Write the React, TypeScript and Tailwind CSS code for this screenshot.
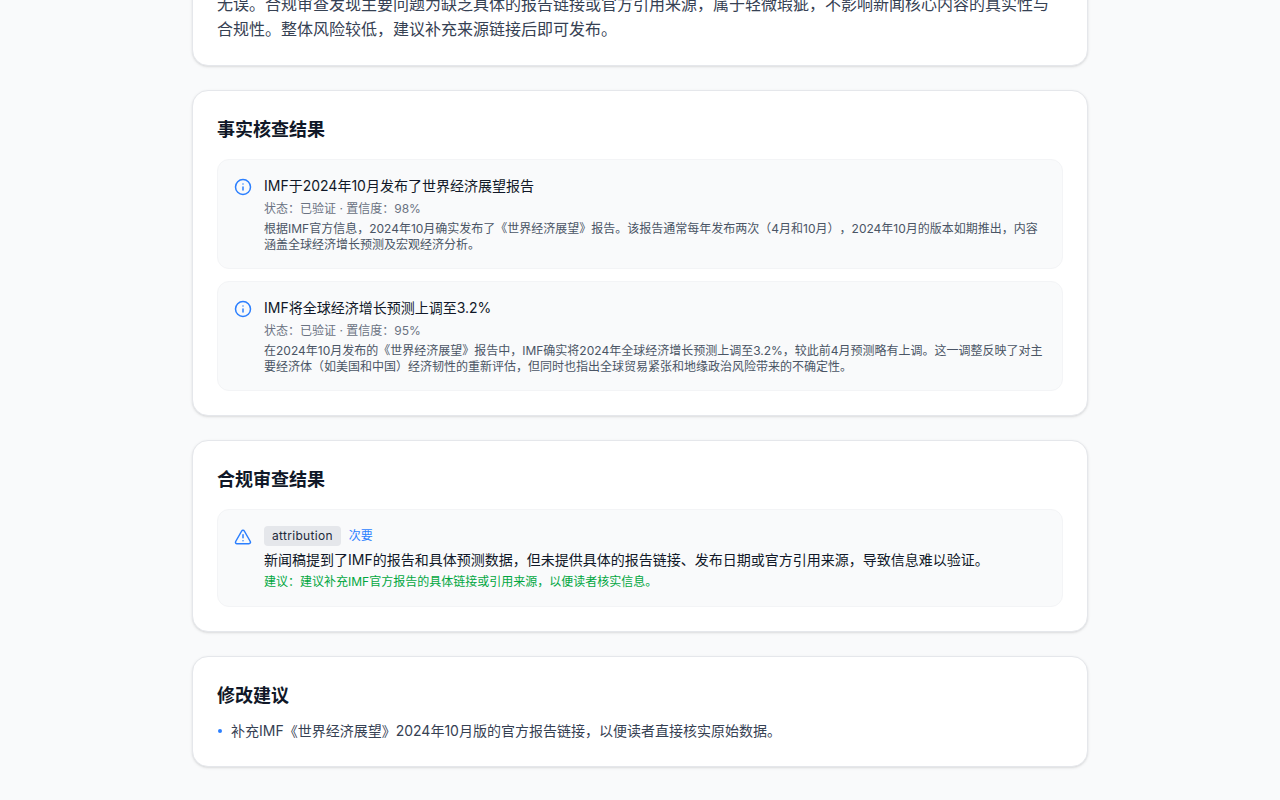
import { Info, TriangleAlert } from 'lucide-react'

const facts = [
  {
    title: 'IMF于2024年10月发布了世界经济展望报告',
    status: '状态：已验证 · 置信度：98%',
    detail:
      '根据IMF官方信息，2024年10月确实发布了《世界经济展望》报告。该报告通常每年发布两次（4月和10月），2024年10月的版本如期推出，内容涵盖全球经济增长预测及宏观经济分析。',
  },
  {
    title: 'IMF将全球经济增长预测上调至3.2%',
    status: '状态：已验证 · 置信度：95%',
    detail:
      '在2024年10月发布的《世界经济展望》报告中，IMF确实将2024年全球经济增长预测上调至3.2%，较此前4月预测略有上调。这一调整反映了对主要经济体（如美国和中国）经济韧性的重新评估，但同时也指出全球贸易紧张和地缘政治风险带来的不确定性。',
  },
]

function Card({ title, children }: { title?: string; children: React.ReactNode }) {
  return (
    <section className="bg-white border border-gray-200 rounded-2xl shadow-sm p-6">
      {title && <h2 className="text-lg leading-[30px] font-semibold text-gray-900 mb-[14px]">{title}</h2>}
      {children}
    </section>
  )
}

export default function App() {
  return (
    <div className="h-screen overflow-hidden bg-gray-50 font-['Inter','Noto_Sans_CJK_SC',sans-serif] [text-spacing-trim:space-all]">
      <div className="max-w-4xl mx-auto -mt-[34px] flex flex-col gap-6">
        <Card>
          <p className="text-base leading-[25px] text-gray-700 mt-px -mb-px">
            无误。合规审查发现主要问题为缺乏具体的报告链接或官方引用来源，属于轻微瑕疵，不影响新闻核心内容的真实性与合规性。整体风险较低，建议补充来源链接后即可发布。
          </p>
        </Card>

        <Card title="事实核查结果">
          <div className="flex flex-col gap-3">
            {facts.map(fact => (
              <div key={fact.title} className="flex gap-3 bg-gray-50 border border-gray-100 rounded-xl p-4">
                <Info className="w-[18px] h-[18px] mt-0.5 shrink-0 text-blue-500" />
                <div className="flex-1">
                  <p className="text-sm text-gray-900">{fact.title}</p>
                  <p className="text-xs leading-[18px] text-gray-500 mt-1">{fact.status}</p>
                  <p className="text-xs text-gray-600 mt-[3px] -mb-px">{fact.detail}</p>
                </div>
              </div>
            ))}
          </div>
        </Card>

        <Card title="合规审查结果">
          <div className="flex gap-3 bg-gray-50 border border-gray-100 rounded-xl p-4">
            <TriangleAlert className="w-[18px] h-[18px] mt-0.5 shrink-0 text-blue-500" />
            <div className="flex-1">
              <div className="flex items-center gap-2">
                <span className="text-xs leading-5 tracking-[0.3px] px-2 rounded bg-gray-200 text-gray-800">attribution</span>
                <span className="text-xs text-blue-500">次要</span>
              </div>
              <p className="text-sm text-gray-900 mt-1">
                新闻稿提到了IMF的报告和具体预测数据，但未提供具体的报告链接、发布日期或官方引用来源，导致信息难以验证。
              </p>
              <p className="text-xs text-green-600 mt-1">建议：建议补充IMF官方报告的具体链接或引用来源，以便读者核实信息。</p>
            </div>
          </div>
        </Card>

        <Card title="修改建议">
          <ul className="-mt-1 mb-px">
            <li className="flex items-center gap-[9px] ml-px text-sm text-gray-700">
              <span className="w-1 h-1 rounded-full bg-blue-500 shrink-0" />
              补充IMF《世界经济展望》2024年10月版的官方报告链接，以便读者直接核实原始数据。
            </li>
          </ul>
        </Card>
      </div>
    </div>
  )
}
